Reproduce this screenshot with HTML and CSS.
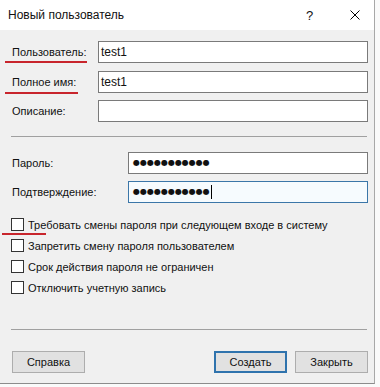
FILE: index.html
```html
<!DOCTYPE html>
<html>
  <head>
    <meta charset="UTF-8" />
    <title>Новый пользователь</title>
    <link rel="stylesheet" href="styles.css">
  </head>
  <body>
    <div class="dialog">
      <div class="titlebar">
        <span class="title">Новый пользователь</span>
        <span class="help">?</span>
        <svg class="close" width="10" height="10" viewBox="0 0 10 10">
          <path d="M0.5 0.5 L9.5 9.5 M9.5 0.5 L0.5 9.5" stroke="#000" stroke-width="1" fill="none" />
        </svg>
      </div>
      <div class="content">
        <div class="fields">
          <div class="label"><span class="mark mark-user">Пользователь:</span></div>
          <div class="input">test1</div>
          <div class="label"><span class="mark mark-name">Полное имя:</span></div>
          <div class="input">test1</div>
          <div class="label">Описание:</div>
          <div class="input"></div>
        </div>
        <div class="sep"></div>
        <div class="fields pass">
          <div class="label">Пароль:</div>
          <div class="input"><span class="dots">●●●●●●●●●●●</span></div>
          <div class="label">Подтверждение:</div>
          <div class="input focused"><span class="dots">●●●●●●●●●●●</span><span class="caret"></span></div>
        </div>
        <div class="checks">
          <div class="check"><span class="box mark-box"></span>Требовать смены пароля при следующем входе в систему</div>
          <div class="check"><span class="box"></span>Запретить смену пароля пользователем</div>
          <div class="check"><span class="box"></span>Срок действия пароля не ограничен</div>
          <div class="check"><span class="box"></span>Отключить учетную запись</div>
        </div>
        <div class="sep sep-bottom"></div>
        <div class="buttons">
          <div class="btn">Справка</div>
          <div class="spacer"></div>
          <div class="btn default">Создать</div>
          <div class="btn">Закрыть</div>
        </div>
      </div>
    </div>
  </body>
</html>
```
FILE: styles.css
```css
* {
  margin: 0;
  padding: 0;
  box-sizing: border-box;
}
body {
  background-color: #fafafa;
  font-family: "Liberation Sans", Arial, sans-serif;
  font-size: 11px;
  color: #111;
  width: 380px;
  height: 387px;
  overflow: hidden;
}
.dialog {
  width: 375px;
  height: 384px;
  border-right: 1px solid #a8a8a8;
  border-bottom: 1px solid #8c8c8c;
  background-color: #f0f0f0;
  display: flex;
  flex-direction: column;
}
.titlebar {
  height: 30px;
  background-color: #fff;
  display: flex;
  align-items: center;
  padding-left: 8px;
  font-size: 12px;
}
.title {
  flex: 1;
}
.help {
  width: 44px;
  font-size: 13px;
}
.close {
  margin-right: 14px;
}
.content {
  flex: 1;
  padding: 11px 6px 10px 12px;
  display: flex;
  flex-direction: column;
}
.fields {
  display: grid;
  grid-template-columns: 86px 1fr;
  row-gap: 7.5px;
  align-items: center;
}
.fields.pass {
  grid-template-columns: 116px 1fr;
  row-gap: 7px;
  margin-top: 15px;
}
.label {
  line-height: 16px;
  white-space: nowrap;
}
.mark {
  position: relative;
}
.mark::after {
  content: "";
  position: absolute;
  left: -7px;
  bottom: -5px;
  height: 2px;
  background-color: #c8252c;
}
.mark-user::after {
  width: 82px;
}
.mark-name::after {
  width: 73px;
  bottom: -6px;
}
.input {
  height: 22px;
  border: 1px solid #7a7a7a;
  background-color: #fff;
  padding: 1px 2px;
  line-height: 18px;
  font-size: 12px;
  display: flex;
  align-items: center;
}
.input.focused {
  border-color: #3b76a8;
  background-color: #f6fbfe;
}
.dots {
  font-family: "DejaVu Sans", sans-serif;
  font-size: 8px;
  letter-spacing: 0;
  padding-left: 2px;
}
.caret {
  width: 1px;
  height: 14px;
  margin-left: 1px;
  background-color: #000;
}
.sep {
  height: 1px;
  background-color: #a0a0a0;
  margin: 14px 1px 0 -1px;
}
.checks {
  margin-top: 15px;
  display: flex;
  flex-direction: column;
}
.check {
  height: 21px;
  display: flex;
  align-items: flex-start;
  line-height: 14px;
  margin-left: -1px;
  white-space: nowrap;
}
.box {
  width: 13px;
  height: 13px;
  border: 1px solid #333;
  background-color: #fff;
  margin-right: 4px;
  position: relative;
}
.mark-box::after {
  content: "";
  position: absolute;
  left: -10px;
  top: 14px;
  width: 44px;
  height: 2px;
  background-color: #c8252c;
}
.sep-bottom {
  margin-top: 27px;
}
.buttons {
  margin-top: 21px;
  display: flex;
  gap: 8px;
}
.spacer {
  flex: 1;
}
.btn {
  width: 73px;
  height: 22px;
  border: 1px solid #adadad;
  background-color: #e1e1e1;
  display: flex;
  align-items: center;
  justify-content: center;
}
.btn.default {
  border: 2px solid #2f73ad;
}
```
